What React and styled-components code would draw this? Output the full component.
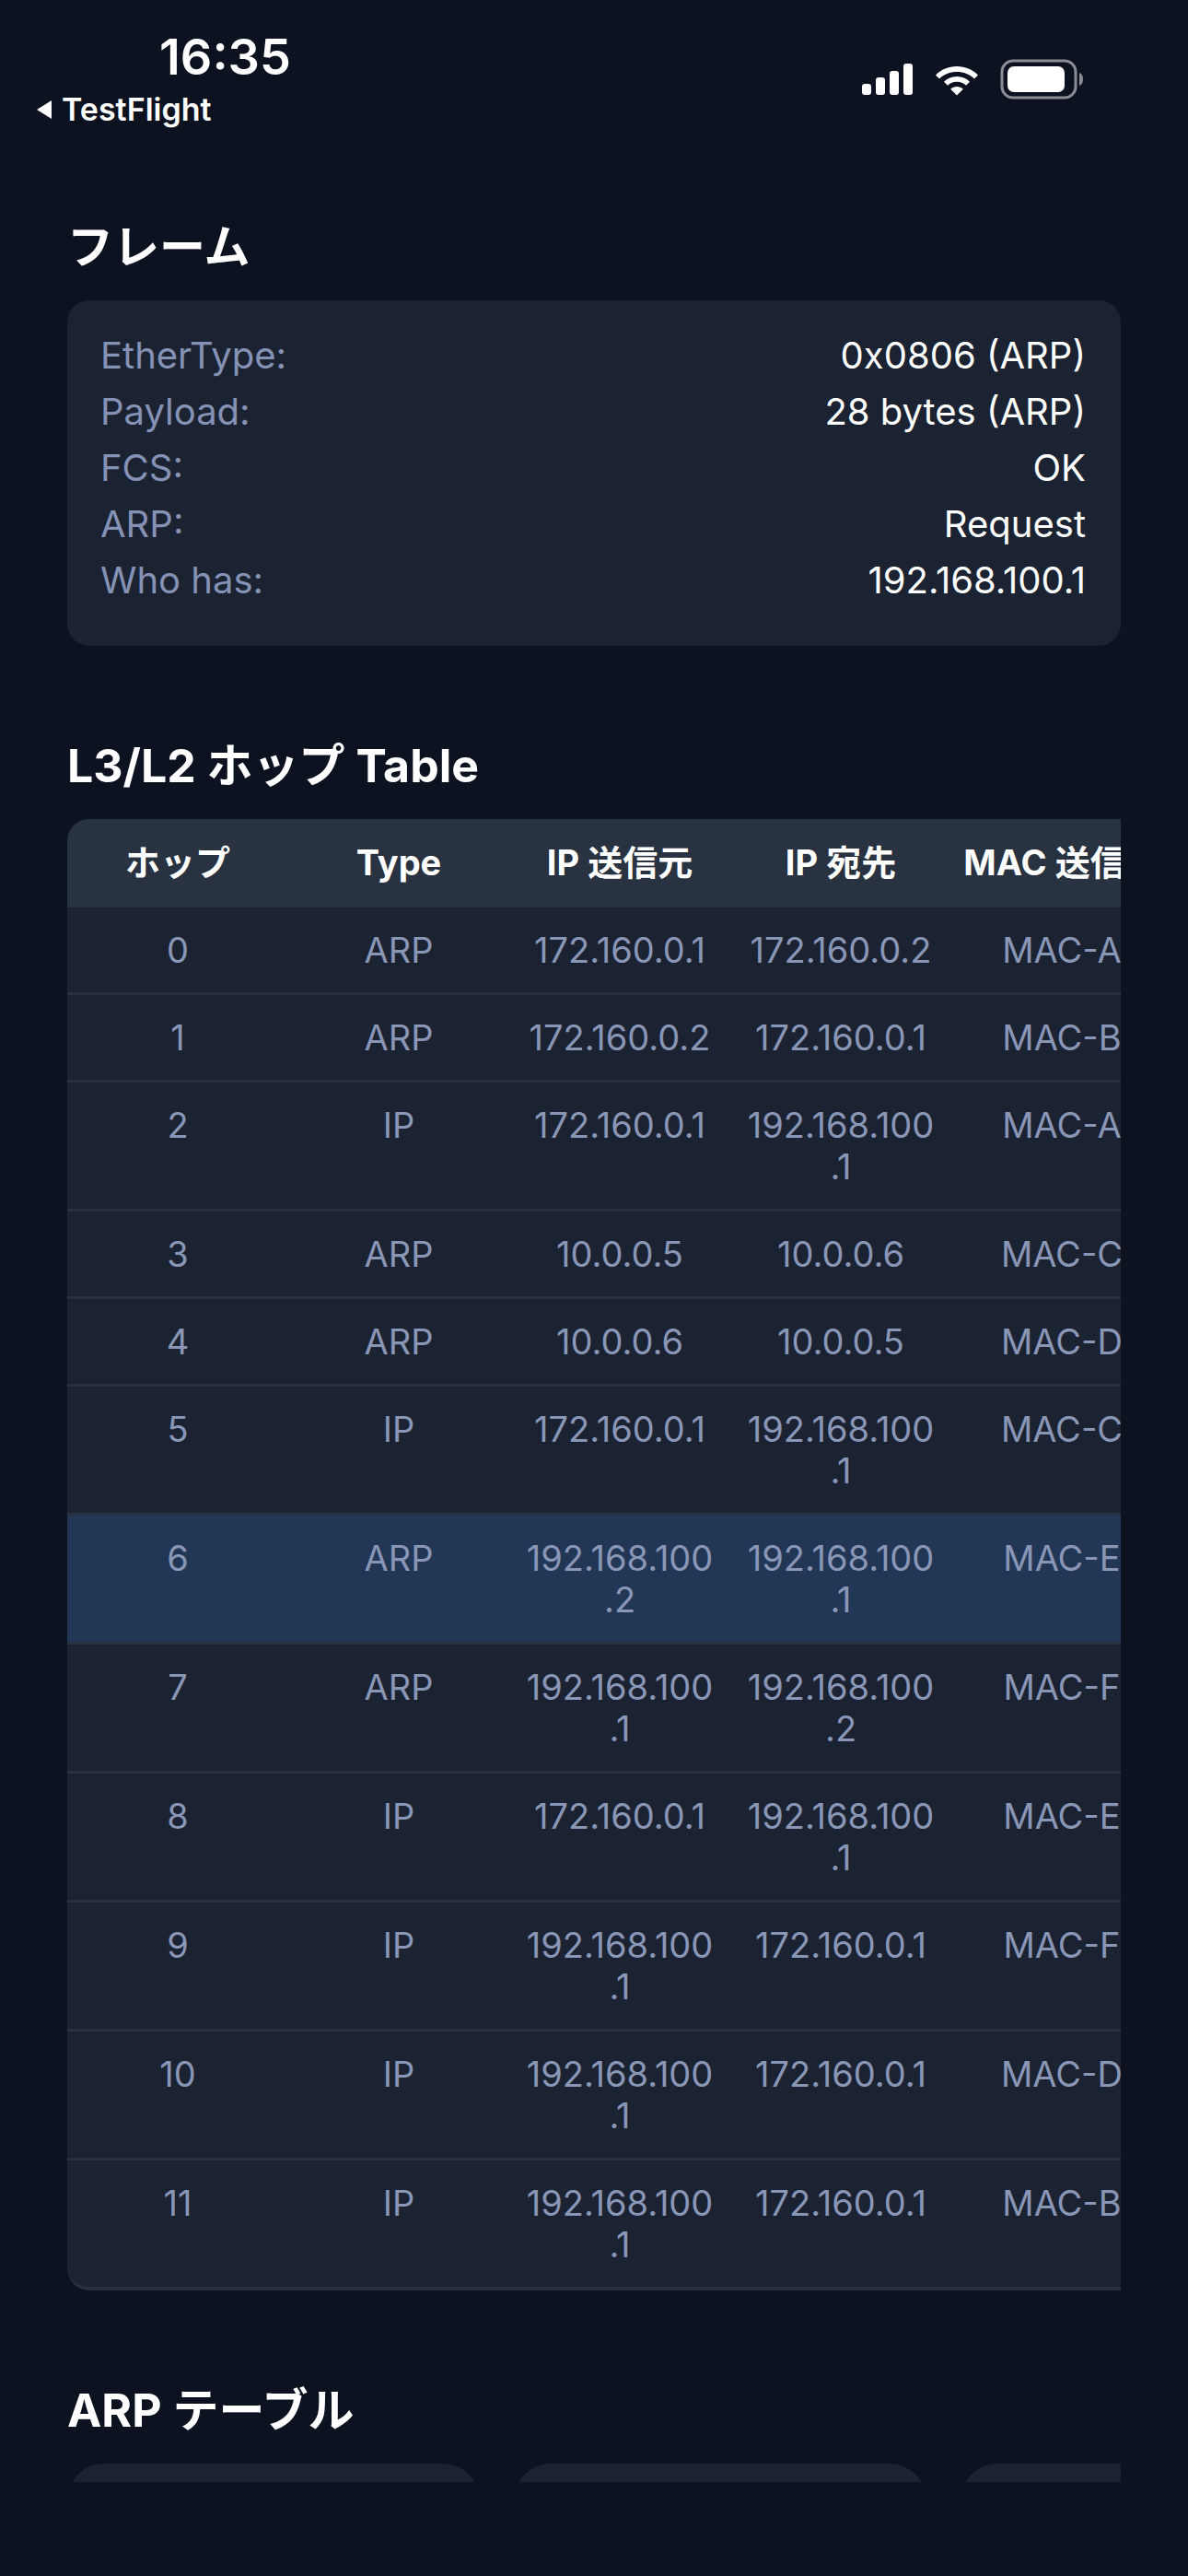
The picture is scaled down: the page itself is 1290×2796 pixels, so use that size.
import styled, { createGlobalStyle } from "styled-components";

const Global = createGlobalStyle`
  html, body { margin: 0; padding: 0; background: #0c1220; }
  body { font-family: Inter, "Noto Sans CJK JP", sans-serif; color: #fff; }
`;

const Screen = styled.div`
  width: 1290px;
  height: 2796px;
  background: #0c1220;
`;

const StatusBar = styled.div`
  height: 170px;
  display: flex;
  justify-content: space-between;
  padding: 30px 112px 0 39px;
  box-sizing: border-box;
`;

const TimeCol = styled.div`
  display: flex;
  flex-direction: column;
  align-items: flex-start;
`;

const Time = styled.div`
  font-size: 54px;
  font-weight: 600;
  margin-left: 134px;
  line-height: 64px;
`;

const Back = styled.div`
  display: flex;
  align-items: center;
  gap: 10px;
  font-size: 34px;
  font-weight: 600;
  line-height: 50px;
`;

const Icons = styled.div`
  display: flex;
  align-items: center;
  gap: 22px;
  height: 60px;
  margin-top: 26px;
`;

const Content = styled.div`
  height: 2524px;
  overflow: hidden;
  padding: 68px 73px 0;
  box-sizing: border-box;
`;

const Heading = styled.h2`
  margin: ${(p) => p.$top || 0}px 0 28px;
  font-size: 50px;
  font-weight: 700;
  line-height: 60px;
  font-family: Inter, "Noto Sans CJK JP", sans-serif;
`;

const Card = styled.div`
  background: #1b2333;
  border-radius: 24px;
  padding: 29px 38px 41px 36px;
`;

const InfoRow = styled.div`
  display: flex;
  justify-content: space-between;
  font-size: 40px;
  line-height: 61px;
`;

const Label = styled.span`
  color: #8592b5;
`;

const TableWrap = styled.div`
  width: 1144px;
  overflow: hidden;
  border-radius: 24px 0 0 24px;
  background: #1b2333;
  border-bottom: 4px solid #283140;
`;

const Grid = styled.div`
  display: grid;
  grid-template-columns: repeat(7, 240px);
  width: 1680px;
`;

const Row = styled.div`
  display: contents;
`;

const Cell = styled.div`
  padding: ${(p) => (p.$head ? "25px" : "24px")} 10px 23px;
  text-align: center;
  font-size: 38px;
  line-height: 45px;
  color: ${(p) => (p.$head ? "#fff" : "#8a96b6")};
  font-weight: ${(p) => (p.$head ? 700 : 400)};
  background: ${(p) => (p.$head ? "#283240" : p.$hl ? "#223756" : "#1b2333")};
  border-top: ${(p) => (p.$head ? "none" : "3px solid #283140")};
  white-space: pre-line;
`;

const CardStrip = styled.div`
  display: flex;
  gap: 37px;
  width: 1144px;
  overflow: hidden;
`;

const ArpCard = styled.div`
  flex: 0 0 448px;
  height: 300px;
  background: #1b2333;
  border-radius: 40px 40px 0 0;
`;

const frame = [
  ["EtherType:", "0x0806 (ARP)"],
  ["Payload:", "28 bytes (ARP)"],
  ["FCS:", "OK"],
  ["ARP:", "Request"],
  ["Who has:", "192.168.100.1"],
];

const b = "192.168.100\n.1";
const b2 = "192.168.100\n.2";
const hops = [
  ["0", "ARP", "172.160.0.1", "172.160.0.2", "MAC-A"],
  ["1", "ARP", "172.160.0.2", "172.160.0.1", "MAC-B"],
  ["2", "IP", "172.160.0.1", b, "MAC-A"],
  ["3", "ARP", "10.0.0.5", "10.0.0.6", "MAC-C"],
  ["4", "ARP", "10.0.0.6", "10.0.0.5", "MAC-D"],
  ["5", "IP", "172.160.0.1", b, "MAC-C"],
  ["6", "ARP", b2, b, "MAC-E"],
  ["7", "ARP", b, b2, "MAC-F"],
  ["8", "IP", "172.160.0.1", b, "MAC-E"],
  ["9", "IP", b, "172.160.0.1", "MAC-F"],
  ["10", "IP", b, "172.160.0.1", "MAC-D"],
  ["11", "IP", b, "172.160.0.1", "MAC-B"],
];

const heads = ["ホップ", "Type", "IP 送信元", "IP 宛先", "MAC 送信元", "MAC 宛先", "備考"];

const StatusIcons = () => (
  <Icons>
    <svg width="56" height="34" viewBox="0 0 56 34" fill="#fff">
      <rect x="0" y="22" width="10" height="12" rx="3" />
      <rect x="15" y="15" width="10" height="19" rx="3" />
      <rect x="30" y="8" width="10" height="26" rx="3" />
      <rect x="45" y="0" width="10" height="34" rx="3" />
    </svg>
    <svg width="50" height="36" viewBox="0 0 50 36" fill="#fff">
      <path d="M25 4C16 4 8 7.5 2 13.5l4 4C11 12.5 17.5 10 25 10s14 2.5 19 7.5l4-4C42 7.5 34 4 25 4z" />
      <path d="M25 15c-5.5 0-10.5 2.2-14 5.8l4 4c2.6-2.5 6.1-4 10-4s7.4 1.5 10 4l4-4C35.5 17.2 30.5 15 25 15z" />
      <path d="M25 26c-2.7 0-5 1-6.8 2.8L25 35.5l6.8-6.7C30 27 27.7 26 25 26z" />
    </svg>
    <svg width="92" height="44" viewBox="0 0 92 44">
      <rect x="2" y="2" width="80" height="40" rx="12" fill="none" stroke="#8a8d94" strokeWidth="3" />
      <rect x="8" y="8" width="62" height="28" rx="7" fill="#fff" />
      <path d="M86 15c3 1 4 4 4 7s-1 6-4 7z" fill="#8a8d94" />
    </svg>
  </Icons>
);

export default function App() {
  return (
    <Screen>
      <Global />
      <StatusBar>
        <TimeCol>
          <Time>16:35</Time>
          <Back>
            <svg width="18" height="22" viewBox="0 0 18 22">
              <path d="M17 1v20L1 11z" fill="#fff" />
            </svg>
            TestFlight
          </Back>
        </TimeCol>
        <StatusIcons />
      </StatusBar>
      <Content>
        <Heading>フレーム</Heading>
        <Card>
          {frame.map(([k, v]) => (
            <InfoRow key={k}>
              <Label>{k}</Label>
              <span>{v}</span>
            </InfoRow>
          ))}
        </Card>
        <Heading $top={100}>L3/L2 ホップ Table</Heading>
        <TableWrap>
          <Grid>
            <Row>
              {heads.map((h) => (
                <Cell $head key={h}>{h}</Cell>
              ))}
            </Row>
            {hops.map((r) => (
              <Row key={r[0]}>
                {[...r, "-", "-"].map((c, i) => (
                  <Cell key={i} $hl={r[0] === "6"}>{c}</Cell>
                ))}
              </Row>
            ))}
          </Grid>
        </TableWrap>
        <Heading $top={100}>ARP テーブル</Heading>
        <CardStrip>
          <ArpCard />
          <ArpCard />
          <ArpCard />
        </CardStrip>
      </Content>
    </Screen>
  );
}
